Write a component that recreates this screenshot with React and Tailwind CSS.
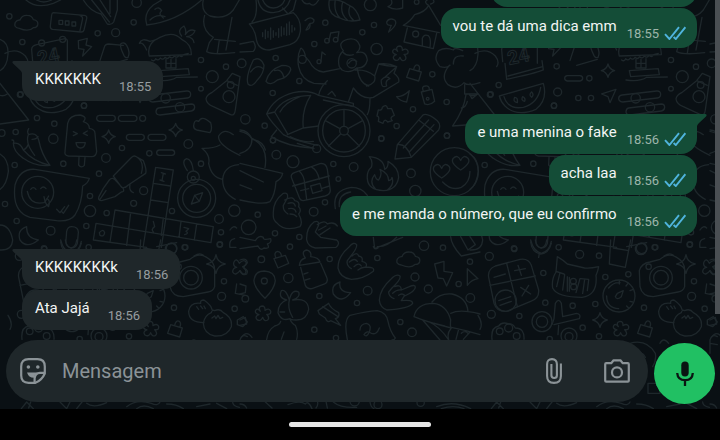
import React from "react";

const spark = (x, y, r = 20) =>
  `M${x} ${y - r} Q${x + 4} ${y - 4} ${x + r} ${y} Q${x + 4} ${y + 4} ${x} ${y + r} Q${x - 4} ${y + 4} ${x - r} ${y} Q${x - 4} ${y - 4} ${x} ${y - r}z`;
const heart = (x, y, r) =>
  `M${x} ${y + r} Q${x - r * 1.5} ${y} ${x - r} ${y - r * 0.6} Q${x - r * 0.4} ${y - r * 1.2} ${x} ${y - r * 0.3} Q${x + r * 0.4} ${y - r * 1.2} ${x + r} ${y - r * 0.6} Q${x + r * 1.5} ${y} ${x} ${y + r}z`;
const cloud = (x, y) =>
  `M${x - 22} ${y + 15} q-18 -2 -12 -18 q5 -8 14 -7 q5 -15 22 -14 q14 0 18 13 q16 2 13 16 q-3 9 -13 8 q-14 14 -42 2z`;
const cross = (x, y) =>
  `M${x - 7} ${y - 8} q-8 -14 5 -16 q10 0 9 13 q12 -8 17 2 q2 12 -12 10 q10 10 3 17 q-10 6 -15 -8 q-6 14 -17 7 q-8 -10 6 -15 q-14 -4 -10 -13 q6 -8 14 3z`;
const padlock = (x, y) =>
  `M${x - 14} ${y - 12} L${x + 21} ${y - 2} L${x + 13} ${y + 25} L${x - 23} ${y + 14}z M${x - 2} ${y - 10} Q${x + 2} ${y - 27} ${x + 12} ${y - 22} Q${x + 19} ${y - 16} ${x + 13} ${y - 4}`;

// Each doodle sheet is drawn at three times its size on screen.
const SHEETS = [
  {
    x: 0,
    y: 0,
    dots: [[28,49,8],[401,67,8],[293,100,8],[347,98,12],[67,126,8],[603,180,8],[678,200,8],[637,230,18],[603,266,7],[60,284,8],[252,317,8],[111,354,8],[163,371,8],[160,416,14],[47,396,8],[5,399,10],[428,355,9],[565,432,13],[366,444,8],[410,8,14],[497,295,14],[540,322,14],[687,290,18],[692,255,10],[125,129,9],[188,118,9]],
    paths: [
      "M160 38L253 46Q262 47 260 56L252 90Q250 97 242 96L158 88Q150 87 151 78L155 45Q156 38 160 38zM240 47Q250 50 247 60L240 92",
      "M177 61h11v12h-11zM196 63h11v12h-11zM216 66h11v12h-11z",
      cloud(80, 70),
      "M250 0Q270 34 303 42L322 72Q335 76 341 66L352 30V0M275 0L328 66M300 0L332 50M330 0V40",
      "M440 72Q430 40 460 15L485 0M440 75Q530 65 605 0M465 28q12 -10 20 4q-12 10 5 22M450 60q20 -20 45 -10",
      "M78 0Q110 28 160 10L182 0M110 0q20 12 45 0",
      "M98 185L95 150Q94 138 110 134L195 116Q204 116 202 130V190",
      "M235 122L262 115 258 135 275 140 248 168 252 148 236 146z",
      "M313 142Q315 132 326 132L370 136M313 142L300 182M362 132q10 -8 18 4q12 20 4 36q-10 4 -14 -10q-10 -20 -8 -30",
      "M448 168Q438 130 480 112Q520 92 545 118Q575 132 574 164zM455 180q8 6 12 -4q8 8 14 -2q8 8 14 -2q8 8 14 -2q8 8 14 -2q8 8 14 -2q8 8 14 -2l14 -4",
      "M545 108Q530 90 552 78Q560 90 556 104Q568 85 585 92Q580 108 560 110Q580 112 582 128M440 150Q430 125 418 130Q425 112 450 124Q470 120 480 112M498 178v26h30v-28M513 178v26M498 190h30",
      "M478 212L565 206 568 224 482 230zM468 240Q510 246 530 232L592 231",
      "M610 0Q602 34 630 48Q676 60 700 30L718 0M614 46Q602 88 640 112L628 128 620 155Q640 166 704 158M696 52L678 150M644 118L706 124M658 120l-6 40",
      "M456 285L560 273Q572 272 572 283Q572 293 562 294L458 306Q446 305 446 295Q447 286 456 285zM476 324L574 312Q584 312 584 322Q583 332 574 333L480 345Q469 345 468 336Q468 326 476 324z",
      "M618 297Q620 285 635 278L680 242 697 220 720 230 706 330Q704 348 692 344L640 320Q620 312 618 297M680 242L712 256",
      "M0 118Q26 128 24 162Q22 200 0 212M15 160Q50 142 76 168Q90 186 80 200M0 250L86 360 0 372M22 282Q10 290 0 286",
      "M298 346h40q8 1 8 9t-8 9h-40q-8 -1 -8 -9t8 -9zM363 346h40q8 1 8 9t-8 9h-40q-8 -1 -8 -9t8 -9zM387 403h38q8 1 8 9t-8 9h-38q-8 -1 -8 -9t8 -9zM452 403h38q8 1 8 9t-8 9h-38q-8 -1 -8 -9t8 -9z",
      spark(326, 410), spark(527, 390),
      "M582 372q2 -14 14 -8q8 -14 22 -6l14 10q6 20 -2 30l-40 -8q-12 -4 -8 -18z",
    ],
  },
  {
    x: 10,
    y: 0,
    dots: [[230,199,8],[32,283,8],[56,255,8],[233,276,12],[222,317,8],[295,294,8],[333,294,8],[328,235,8]],
    paths: [
      "M75 190L80 238Q160 222 190 210L186 182M84 228L188 200M58 288L190 250Q204 300 168 328Q110 352 75 318Q62 305 58 288M72 290Q84 330 130 322Q174 310 182 262M104 292q10 0 8 16q-14 -2 -8 -16M128 290q10 4 6 14q-12 -2 -6 -14M155 276q8 8 0 16q-10 -8 0 -16",
      "M262 227h38q8 1 8 8t-8 8h-38q-8 -1 -8 -8t8 -8z",
      spark(384, 212, 20),
      "M365 282L408 268 390 308 384 290zM290 196l62 -18",
    ],
  },
  {
    x: 240,
    y: 0,
    dots: [[391,14,18],[256,68,8],[402,75,8],[367,97,8],[223,132,8],[107,174,8],[410,147,17],[577,223,8],[178,243,8],[98,279,8],[16,358,14],[74,377,8],[99,421,8],[519,328,8],[470,378,8],[424,415,8],[620,306,8],[621,407,8],[5,190,13],[261,122,7],[287,119,7],[237,185,6],[527,102,9],[312,392,78],[312,392,64],[312,392,13],[335,190,14],[187,178,12],[563,296,4],[530,6,7]],
    paths: [
      "M28 72L160 38Q184 56 181 94Q176 126 150 134L88 150Q52 150 48 112Q44 88 28 72z",
      "M68 98v12M76 90v26M84 94v18M92 84v34M100 92v20M108 98v8M116 86v26M124 80v28M132 84v20M140 72v34M148 66v38M156 76v20M164 84v6",
      "M54 0Q62 38 100 38Q140 34 150 0M68 0Q78 24 100 24Q126 22 134 0M128 24L144 42 160 30 168 0",
      "M48 0Q54 48 36 66M0 156L40 154Q52 142 40 124L0 132",
      "M40 180Q62 168 72 196Q72 220 52 240Q36 264 24 252Q16 230 40 180zM32 216Q50 190 70 206M78 244Q86 210 126 196Q154 196 152 210Q144 234 112 240Q90 260 78 244zM104 212Q126 204 132 234",
      "M268 0Q260 44 300 54Q324 68 360 60Q352 26 324 14Q300 -4 268 0M286 0Q280 34 300 54M308 6Q298 40 322 60M330 18Q320 44 340 60",
      "M195 62Q212 46 222 60Q222 72 210 70Q212 88 198 90L208 72M440 66Q448 52 464 60Q476 72 446 96L454 76Q440 78 440 66M186 0q8 16 22 10q14 14 28 -10M444 20q16 -6 10 -20M444 20q20 12 44 4l0 -24",
      "M267 122L272 99 297 95 293 119M243 184L246 156 256 164",
      "M490 76Q512 64 524 44Q556 36 566 16L602 76M490 76L598 98M502 84L492 126 580 146 590 100M547 136V115Q552 101 565 107Q574 114 570 142M566 16q-16 -10 -4 -16M572 12q14 -4 8 -12",
      cross(480, 162),
      "M298 200Q290 170 310 152Q290 128 322 118Q350 112 358 134Q364 146 350 158Q378 150 382 180Q376 206 350 204Q330 222 306 210L298 200M308 156q12 14 32 8M326 190q10 -16 24 -6",
      "M182 145Q170 170 176 200Q184 240 222 250L258 252M184 145Q194 152 196 170L208 184Q222 214 250 216L300 206M345 210Q380 208 404 228L416 192Q440 198 470 200L462 220Q480 234 476 246L400 292Q366 300 340 264L326 304M380 258Q410 250 404 228M352 206Q358 250 386 258M424 240q14 -16 26 -4q-16 6 -10 22q-18 8 -16 -18M416 192q30 -4 54 8l-34 30M390 296Q390 330 382 344",
      "M80 342Q100 294 160 278Q206 268 236 286L340 310V320L250 300M262 242Q240 262 236 286M80 342Q88 360 130 404Q158 420 232 436M80 342L104 336 142 400M104 336Q130 288 212 286M212 286Q184 330 190 384L142 404M120 336Q134 308 180 290M190 384L236 378M172 430L222 446M264 284l12 -10 10 14",
      "M312 378V328M324 386L368 362M322 402L358 438M302 402L266 438M300 386L256 362",
      padlock(523, 218), "M544 276L576 268 584 304Q570 318 554 312zM550 274Q544 258 556 258Q568 256 568 268",
      "M415 330q12 2 12 -8q12 -12 16 4l12 0l8 20q-16 6 -6 16l-14 4q-10 -12 -14 4l-14 -6q4 -16 -4 -16z",
      "M472 434L548 346Q560 336 592 362Q604 374 596 390L514 472 465 477zM472 434Q500 430 514 472M490 444L566 360M508 456L582 374M536 360L580 394",
      "M668 152Q644 140 640 150Q616 140 596 152Q578 176 600 200Q620 206 630 196M640 192Q640 164 670 168M628 196Q600 230 624 254Q650 272 672 248Q684 260 720 248M674 254V282H714M688 282L696 296 710 284M678 284Q672 330 638 378L714 372M664 324q14 -2 18 -20",
      "M470 290Q490 290 508 272L500 306Q480 304 470 290z",
      "M0 390Q26 392 36 418Q70 424 76 450",
    ],
  },
  {
    x: 0,
    y: 130,
    dots: [[318,84,13],[44,105,8],[190,101,8],[297,131,8],[603,101,8],[431,182,12],[401,220,9],[270,198,8],[270,243,17],[320,249,8],[516,243,8],[15,222,8],[50,273,8],[152,302,13],[259,288,8],[657,267,13],[703,242,17],[663,307,8],[660,343,8],[556,352,8],[515,355,16],[132,355,8],[113,187,48],[590,205,57],[590,205,42],[580,141,18],[448,70,8],[580,145,6]],
    paths: [
      "M195 65L203 -20Q208 -45 240 -45Q264 -40 250 -25Q268 -20 268 -5Q285 -2 285 10L290 65Q288 80 275 80L205 78Q193 76 195 65zM237 82L236 105Q244 116 253 106L255 82M220 5l12 6-12 6M262 3l-12 7 12 6M228 38h28q-2 16-14 16t-14-16",
      "M40 40Q60 35 70 60Q100 95 150 106Q108 112 70 85Q40 65 40 40M85 14Q110 5 116 30Q125 75 150 106M85 14Q75 40 104 76M40 40Q44 30 36 30M86 14Q80 6 86 -4M70 60q12 -6 14 -16M96 28q14 0 18 -8",
      "M45 165Q60 115 105 118L268 145Q264 160 248 168Q246 222 225 255Q210 276 170 272L90 262Q35 245 45 165z",
      "M82 184Q90 226 132 218Q140 210 146 198M92 178q8 -10 16 0M122 176q8 -10 16 0M132 200q4 24 14 30M140 206q12 4 6 22M170 238l10 10 14 -18M184 244l6 6 16 -24",
      "M340 138L395 82Q402 74 412 82L430 92Q441 120 437 130L385 165Q375 176 365 172zM412 82Q434 98 424 130M390 164q-4 18 10 24M328 150Q338 138 350 155L370 176Q374 186 364 186L345 200 305 212Q293 212 297 200L310 175zM300 208l18 -26",
      "M467 112L520 120 484 352M467 112L430 348M460 160L512 168M452 210L505 218M345 240L640 290 633 338 288 280 280 330 440 352M345 240L330 336M392 248L380 346M590 282L583 330M543 275L537 322M490 264L484 316",
      "M484 128l12 4M490 130l-4 22M480 150l12 4M552 292l14 4-8 8q10 6-4 10M298 308q12-14 16 0q-2 14-14 8zM460 274l4 16q-12 8-4 16",
      "M574 222L584 196 608 188 598 214zM584 196L598 214",
      "M562 122Q542 92 560 86Q576 88 580 122M606 55Q640 56 660 45M606 55Q632 76 626 100Q634 142 668 148M720 76Q652 44 656 18Q672 -8 700 14M716 104Q672 108 668 148Q668 190 706 208",
      "M80 290Q50 300 60 330Q80 358 115 330Q78 325 80 290z",
      "M215 290Q236 290 235 308L232 340Q226 358 208 352Q196 346 198 330L200 304Q203 290 215 290zM182 336Q186 368 212 372Q236 370 244 340",
      "M0 72Q26 88 25 125Q20 165 0 178M0 285Q30 286 38 330Q36 362 0 360",
      "M478 60h38q8 1 8 8t-8 8h-38q-8 -1 -8 -8t8 -8z",
      "M690 300q10 -16 20 -6M690 352q-4 -24 14 -26M690 352h18",
    ],
  },
  {
    x: 240,
    y: 130,
    dots: [[109,74,13],[159,95,18],[280,102,8],[341,111,13],[295,147,7],[513,130,13],[255,217,8],[221,245,13],[26,292,22],[53,254,8],[105,310,8],[178,321,8],[150,350,8],[526,183,17],[552,347,14],[609,353,8],[643,125,72],[424,26,8],[621,17,8],[99,31,8],[230,56,12]],
    paths: [
      "M0 100L128 130Q125 146 108 155Q105 195 90 215Q70 226 0 210M0 122L70 156M0 165L35 178M36 25Q86 50 75 112M0 70Q36 60 36 26Q24 8 0 4",
      "M110 0L94 20Q140 50 220 54M150 20q40 20 70 14",
      "M155 145Q150 132 165 127L240 101Q258 98 262 118L271 182Q270 194 255 198L190 212Q180 212 177 200zM158 168L268 138M178 124Q192 136 194 160L200 208M216 112Q232 120 238 148M212 168L240 160 246 182 218 190zM182 182l24 -6M244 176l24 -8",
      "M388 80Q432 84 434 118Q446 112 444 94Q476 112 476 142Q470 180 430 182Q384 180 382 146Q380 124 394 112Q400 94 388 80M406 176Q386 156 404 134Q408 150 416 150Q428 132 420 118Q446 130 446 152Q456 150 456 142Q464 164 442 180",
      heart(605, 122, 22), heart(662, 98, 22),
      "M608 156Q634 184 664 172Q690 158 690 124",
      "M100 252Q98 214 130 190Q146 186 142 204L130 226Q128 242 144 252M134 210Q160 196 164 212Q180 214 176 230Q186 240 176 252M144 220q18 -6 22 8M146 236q18 -4 22 10M150 252q14 0 20 8M176 252Q190 276 180 290Q134 306 112 280Q98 270 100 252",
      "M200 330Q198 294 222 276Q238 270 236 286L226 306M232 284Q256 268 262 282Q282 274 292 288M236 300L258 288M240 314L270 294M226 306L242 322 290 330Q302 340 288 352L226 354Q204 350 200 330",
      "M0 322L46 332Q56 314 70 322Q68 332 92 326Q96 338 82 342Q92 358 72 354Q62 364 54 348L0 356",
      "M286 236Q276 180 334 172Q366 172 382 196M298 230Q294 192 332 186",
      "M400 322L404 356 488 322M412 350Q440 352 470 322M400 350q4 10 14 4",
      "M632 320Q634 346 664 378L720 366M662 320L684 360 706 344 690 320",
    ],
  },
  {
    x: 240,
    y: 240,
    dots: [[64,58,10],[269,57,8],[412,54,8],[690,65,8],[145,114,14],[73,123,9],[238,168,8],[383,152,13],[351,189,8],[525,111,12],[565,147,12],[656,132,8],[691,174,13],[223,269,8],[481,246,8],[516,277,13],[288,294,8],[16,176,10],[344,484,14],[414,494,12],[542,488,11]],
    paths: [
      "M75 175Q40 140 42 120Q45 93 73 93Q105 95 106 122Q104 146 75 175z",
      "M102 56L136 46 146 70 114 84zM108 54Q100 38 112 34Q124 36 124 48",
      "M0 60q20 -8 22 8q-14 12 -8 18q12 4 6 16q-10 6 -20 -10",
      "M178 76Q180 58 196 54Q182 34 200 30Q216 34 212 50Q236 52 240 66zM182 82L196 136Q202 148 216 146L254 132Q266 126 260 112L242 70M192 102l12 -4M196 120l14 -4",
      "M294 84Q294 48 328 20Q340 4 350 14Q352 24 334 46L322 62Q318 76 334 86M336 48Q352 34 356 48Q370 50 366 64Q384 68 378 80M328 66q16 -14 24 -2M342 80q14 -14 22 -2M354 90q12 -10 24 -8M378 82Q406 80 400 94Q370 118 334 118Q300 114 294 84",
      "M418 180Q420 146 454 116Q470 100 480 108Q484 118 456 144L446 156Q446 170 462 176M464 140Q482 132 484 148M458 160Q470 148 484 150L508 140Q526 132 526 142Q526 154 494 168M476 166q10 -8 18 0L484 182Q518 178 518 190Q508 206 440 210Q420 202 418 180",
      cloud(506, 60),
      "M584 72L612 64 612 94 638 98 620 138 610 116 594 114zM682 86L682 136Q696 118 714 116z",
      "M300 126Q272 134 280 162Q304 194 332 158Q294 156 300 126z",
      "M234 212L266 190Q270 204 296 218Q300 232 286 236L302 256 272 242Q262 250 256 234L238 222zM248 200l46 30",
      cross(68, 222),
      "M140 180Q114 174 124 152Q138 146 148 180Q156 146 176 156Q182 172 158 180Q204 172 206 208Q200 242 166 240Q152 240 150 236Q124 246 114 218Q114 190 140 180M148 180Q142 206 158 232M120 216h14M122 244Q120 254 104 258Q84 270 80 298M150 238Q156 252 166 256Q176 276 170 298M132 276l-8 22",
      "M322 298Q310 240 330 226Q380 214 412 212Q440 218 444 244Q450 274 466 294Q464 300 456 300M360 270Q360 252 380 250Q396 254 388 276Q380 294 372 284Q380 270 394 280Q410 286 418 264",
      "M522 230Q530 190 580 190Q620 194 632 240Q630 264 634 262M522 230Q560 246 634 264M576 186Q600 158 636 162Q680 172 684 214M632 220Q660 206 720 222M634 262Q676 270 720 284M548 240L600 300M568 246Q600 260 626 300M584 250l30 8M634 264Q620 280 626 298M656 268L648 298M690 276L670 298M664 280q10 -10 20 0",
      "M0 132L18 138 16 158 0 162M0 240L16 232 20 252 0 256M4 292q16 -22 32 0M144 494Q180 480 196 492Q204 480 216 506M232 484q4 10 -4 20M262 504l-4 -20M280 486Q300 504 350 502M390 486q2 16 12 20M590 500Q640 480 692 506M604 506Q640 494 672 506M76 486l20 18M0 492q14 0 20 12",
    ],
  },
  {
    x: 10,
    y: 240,
    dots: [[28,49,12],[103,27,8],[236,22,8],[299,43,12],[357,47,8],[483,27,17],[524,22,8],[629,14,8],[190,99,8],[376,111,8],[445,103,8],[642,124,8],[635,169,12],[674,206,8],[492,203,8],[196,188,8],[278,197,8],[346,192,8],[34,223,12],[118,228,8],[308,263,8],[357,289,8],[209,297,8],[77,182,32],[417,168,48],[186,245,30],[186,245,17],[267,288,24],[267,290,12],[543,113,34],[543,113,22],[506,80,8],[59,274,10],[86,264,12],[110,288,10],[280,124,9],[281,140,9]],
    paths: [
      "M26 112Q22 88 46 78L120 58Q146 54 154 76L176 150Q178 176 152 184L80 214Q50 216 42 190zM80 70L112 200M30 136L166 108M42 112l34 -10M104 92l32 -6M114 76l10 30M122 142l30 20M146 136l-20 32M56 182l36 -12M60 196l34 -12",
      "M232 50Q252 62 262 72L314 84Q330 86 356 80Q354 94 348 106Q354 166 306 172Q232 172 218 144Q214 118 228 96zM228 94l24 8M240 98L230 140M254 104L248 150M262 110v44M268 112v42M300 116L288 158M302 116l24 2M314 118L308 160M326 120L322 152",
      "M418 132v-10M438 138l6 -8M450 152l10 -4M450 184l8 2M440 198l6 6M380 168Q380 204 416 206M412 160l18 -8l-6 18q-14 12 -18 0zM386 144Q400 126 420 128",
      "M478 92Q484 70 510 66L540 58Q566 36 590 52Q616 66 614 94L614 140Q610 154 594 156L520 170Q486 170 480 140zM552 48Q570 36 580 46",
      spark(618, 72, 28),
      "M672 66q8 -14 16 4q16 -16 22 0q-4 10 -12 10q18 16 4 24q-8 0 -12 -12q-14 18 -22 4q0 -12 12 -14q-12 -4 -8 -16z",
      "M582 248Q536 248 536 214Q540 186 572 190Q570 180 582 180Q604 196 606 208M604 218Q606 208 614 212Q630 204 640 218Q668 232 664 260Q652 290 614 288Q582 282 580 250Q584 226 604 218M560 200l6 8M572 198l6 8M582 198l4 8M606 234l8 -6 4 8 6 -10 6 10 8 -4",
      padlock(496, 266), cross(422, 268), spark(360, 240, 22),
      "M222 236L226 190Q236 172 244 190L248 230 290 220Q304 222 298 236L222 254M222 236L216 254M236 256L234 284",
      "M36 298Q32 262 56 258Q66 244 86 252Q98 250 106 264Q134 264 132 298",
      "M152 0Q160 34 184 40Q208 34 214 4M166 0Q170 22 184 24Q198 20 200 0M178 40l-2 12M0 268Q10 250 -6 226",
      "M392 0L388 72 436 82 452 0M400 24L446 32M440 20Q470 14 500 8",
      "M450 310Q500 296 526 340Q530 360 518 380M450 330Q484 330 496 352M540 310q10 -20 26 0M680 132L676 160 706 166M682 240l18 -10 12 16 -14 14 -16 -6zM690 340V300Q696 280 712 290M690 310l22 4M504 430h36v30h-36z",
      "M34 506L50 486 70 506M62 486l-6 18M150 486l20 20 10 -20M200 506L216 486M230 490q20 16 60 -2M350 500Q380 476 424 490Q444 500 450 486M380 506q20 -16 50 0M470 492q30 0 50 14M560 500l40 -8M620 490l30 16M668 486q0 12 20 16",
    ],
  },
];

function Wallpaper() {
  return (
    <svg aria-hidden="true" className="absolute inset-0 h-full w-full" fill="none" stroke="#1e272b" strokeLinecap="round" strokeLinejoin="round" strokeWidth="4">
      <defs>
        <g id="doodles">
          {SHEETS.map((sheet, i) => (
            <g key={i} transform={`translate(${sheet.x} ${sheet.y}) scale(0.3333)`}>
              <path d={sheet.paths.join("")} />
              {sheet.dots.map(([cx, cy, r], j) => (
                <circle key={j} cx={cx} cy={cy} r={r} />
              ))}
            </g>
          ))}
          <text x="39" y="65" transform="rotate(-12 39 65)" fontSize="19" fontWeight="700" strokeWidth="1" className="font-[Roboto]">24</text>
        </g>
      </defs>
      <use href="#doodles" />
      <use href="#doodles" x="470" />
      <use href="#doodles" x="940" />
      <use href="#doodles" x="1410" />
    </svg>
  );
}

function Checks() {
  return (
    <svg role="img" aria-label="Lida" viewBox="0 0 22 14" className="mb-2 ml-[5px] h-[14px] w-[22px] shrink-0 self-end" fill="none" stroke="#4fb3dc" strokeWidth="1.9">
      <path d="M1 8.2L5.4 13L15 1.2M9.6 11L11.8 13L21.4 1.2" />
    </svg>
  );
}

function Message({ text, time, mine, first }) {
  return (
    <li
      className={
        "relative flex h-10 shrink-0 items-start rounded-2xl " +
        (mine ? "self-end bg-[#144d37] pr-[11px] pl-3 " : "self-start bg-[#1f272a] pr-3 pl-[13px] ") +
        (first ? (mine ? "rounded-tr-none" : "rounded-tl-none") : "")
      }
    >
      {first && (
        <svg
          aria-hidden="true"
          viewBox="0 0 10 12"
          className={"absolute top-0 h-3 w-[10px] " + (mine ? "left-full fill-[#144d37]" : "right-full -scale-x-100 fill-[#1f272a]")}
        >
          <path d="M0 0H8.5Q10.5 0.5 9 2.5L2 9Q0.5 10.5 0 12z" />
        </svg>
      )}
      <span className="mt-2 text-[15px] leading-5 whitespace-nowrap text-[#f2f5f4]">{text}</span>
      <time className={"mb-[6px] self-end text-[13px] leading-4 " + (mine ? "ml-[10px] text-[#9db5aa]" : "ml-[18px] text-[#969c9f]")}>{time}</time>
      {mine && <Checks />}
    </li>
  );
}

const GROUPS = [
  { mine: true, continued: true, items: [["vou te dá uma dica emm", "18:55"]] },
  { mine: false, items: [["KKKKKKK", "18:55"]] },
  { mine: true, items: [["e uma menina o fake", "18:56"], ["acha laa", "18:56"], ["e me manda o número, que eu confirmo", "18:56"]] },
  { mine: false, items: [["KKKKKKKKk", "18:56"], ["Ata Jajá", "18:56"]] },
];

function StickerIcon() {
  return (
    <svg viewBox="0 0 26 26" className="h-[26px] w-[26px]" fill="none" stroke="currentColor" strokeWidth="2.2" strokeLinejoin="round">
      <path d="M8.5 1.2H17.5Q24.8 1.2 24.8 8.5V15.5Q22 22 15.5 24.8H8.5Q1.2 24.8 1.2 17.5V8.5Q1.2 1.2 8.5 1.2z" />
      <path d="M14.6 24.5V20.5Q15 15 20 14.8H24.5" />
      <path d="M7 14.4H17.5Q14.6 16 14 19.8Q8.5 19.6 7 14.4z" fill="currentColor" stroke="none" />
      <circle cx="8.4" cy="9" r="1.8" fill="currentColor" stroke="none" />
      <circle cx="17.8" cy="9" r="1.8" fill="currentColor" stroke="none" />
    </svg>
  );
}

function ClipIcon() {
  return (
    <svg viewBox="0 0 16 26" className="h-[26px] w-4" fill="none" stroke="currentColor" strokeWidth="2.1">
      <path d="M14.9 5.5V18Q14.9 24.9 8 24.9T1.1 18V6.2Q1.1 1.1 6 1.1T10.9 6.2V17.2Q10.9 20 8.2 20T5.4 17.2V6" />
    </svg>
  );
}

function CameraIcon() {
  return (
    <svg viewBox="0 0 26 24" className="h-6 w-[26px]" fill="none" stroke="currentColor" strokeWidth="2.2" strokeLinejoin="round">
      <path d="M2.2 4.2H7.2L9.6 1.3H16.4L18.8 4.2H23.8Q24.8 4.2 24.8 5.2V21.7Q24.8 22.7 23.8 22.7H2.2Q1.2 22.7 1.2 21.7V5.2Q1.2 4.2 2.2 4.2z" />
      <circle cx="13" cy="13.4" r="5" />
    </svg>
  );
}

function MicIcon() {
  return (
    <svg viewBox="0 0 18 25" className="h-[25px] w-[18px]" fill="none" stroke="#0a1512" strokeWidth="2.3">
      <rect x="5.3" y="0.5" width="7.4" height="15" rx="3.7" fill="#0a1512" stroke="none" />
      <path d="M1.2 12Q1.7 19 9 19.2T16.8 12M9 19V25" />
    </svg>
  );
}

export default function App() {
  return (
    <div className="flex h-screen flex-col bg-black font-[Roboto,sans-serif]">
      <main className="relative flex min-h-0 flex-1 flex-col overflow-hidden bg-[#0a1014]">
        <Wallpaper />
        <div className="absolute top-0 right-0 h-[314px] w-[5px] bg-[#4a4f53]" />
        <div className="relative flex min-h-0 flex-1 flex-col justify-end overflow-hidden pr-[23px] pb-[10px] pl-[22px]">
          <div className="mb-px h-10 w-[206px] shrink-0 self-end rounded-2xl bg-[#144d37]" />
          <ol className="flex shrink-0 flex-col gap-[13px]">
            {GROUPS.map((group, i) => (
              <li key={i}>
                <ol className="flex flex-col gap-px">
                  {group.items.map(([text, time], j) => (
                    <Message key={text} text={text} time={time} mine={group.mine} first={j === 0 && !group.continued} />
                  ))}
                </ol>
              </li>
            ))}
          </ol>
        </div>
        <form className="relative flex items-end gap-[6px] pr-[5px] pb-[5px] pl-[6px]">
          <div className="mb-[2px] flex h-[62px] min-w-0 flex-1 items-center rounded-full bg-[#1f272a] pr-[18px] pl-[14px] text-[#8b9397]">
            <button type="button" aria-label="Figurinhas">
              <StickerIcon />
            </button>
            <input
              aria-label="Mensagem"
              placeholder="Mensagem"
              className="ml-4 min-w-0 flex-1 bg-transparent text-xl outline-none placeholder:text-[#8b9397]"
            />
            <button type="button" aria-label="Anexar">
              <ClipIcon />
            </button>
            <button type="button" aria-label="Câmera" className="ml-[42px]">
              <CameraIcon />
            </button>
          </div>
          <button type="button" aria-label="Gravar áudio" className="flex h-[61px] w-[61px] shrink-0 items-center justify-center rounded-full bg-[#21c063]">
            <MicIcon />
          </button>
        </form>
      </main>
      <footer className="flex h-[31px] shrink-0 items-center justify-center bg-black">
        <div className="h-[5px] w-[142px] rounded-full bg-[#e6e6e6]" />
      </footer>
    </div>
  );
}
